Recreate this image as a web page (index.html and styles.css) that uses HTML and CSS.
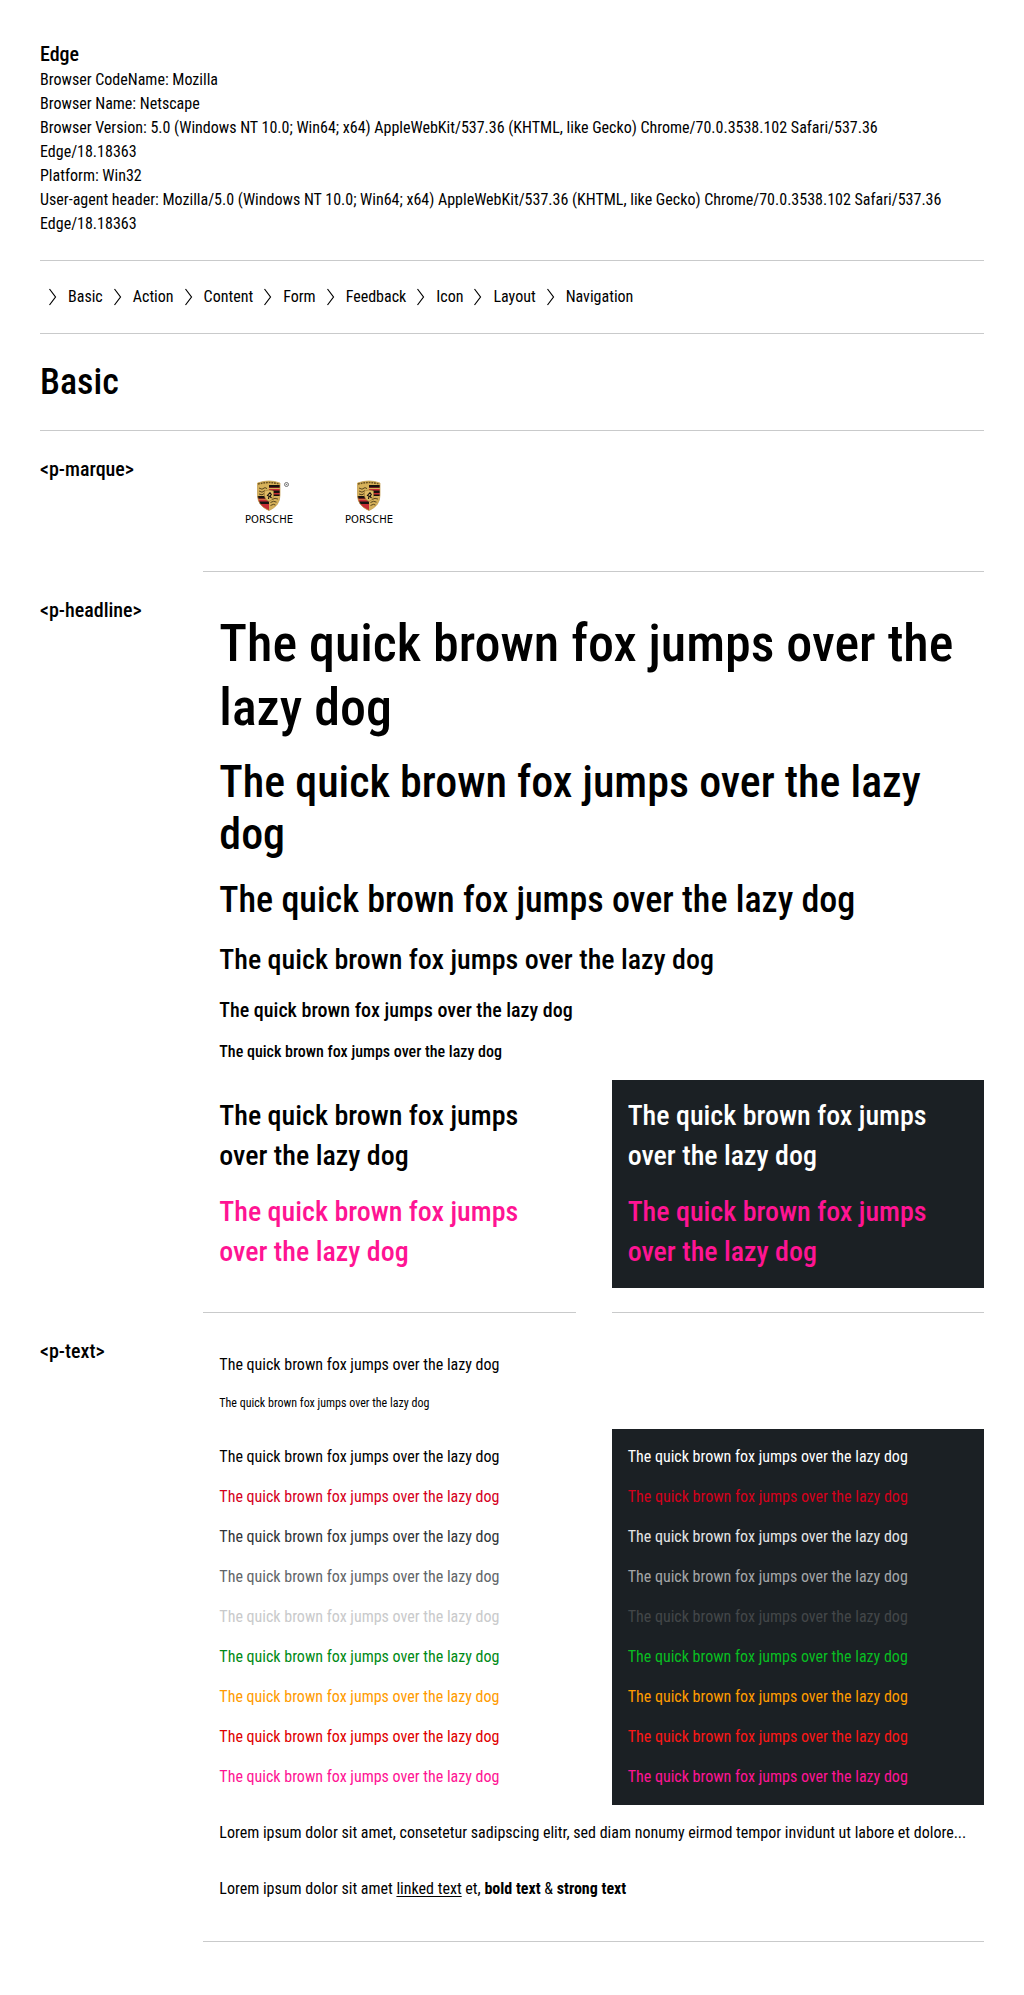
FILE: index.html
```
<!DOCTYPE html>
<html lang="en">
<head>
<meta charset="utf-8">
<meta name="viewport" content="width=device-width, initial-scale=1">
<title>Basic – Components Overview</title>
<link rel="stylesheet" href="styles.css">
</head>
<body>
<svg class="defs" aria-hidden="true">
  <symbol id="chevron" viewBox="0 0 24 24"><path d="M5.500 4 L11.500 12 L5.500 20" fill="none" stroke="currentColor" stroke-width="1.200"/></symbol>
  <symbol id="crest" viewBox="0 0 100 60">
    <clipPath id="shield"><path d="M38.500 12 Q50 8 61 12 L61 24 Q61 35 50 39.500 Q38.500 35 38.500 24 Z"/></clipPath>
    <g clip-path="url(#shield)">
      <rect x="38" y="9" width="24" height="31" fill="#d6b15a"/>
      <path d="M50 14 H61 V25 H50Z" fill="#c62c33"/>
      <path d="M50 14 H61 V16.500 H50Z M50 19.500 H61 V22 H50Z M50 23.500 H61 V25 H50Z" fill="#17120e"/>
      <path d="M50 17 H61 V18 H50Z" fill="#d6b15a"/>
      <path d="M38 25 H50 V40 H38Z" fill="#c62c33"/>
      <path d="M38 25 H50 V27.500 H38Z M38 30.500 H50 V33 H38Z" fill="#17120e"/>
      <path d="M38 28 H50 V28.600 H38Z" fill="#d6b15a"/>
      <path d="M39 13 Q50 10 60.500 13" fill="none" stroke="#6b5220" stroke-width="1.600" stroke-dasharray="1.800 .9"/>
      <path d="M40 17 l3 1.200 3-1.600 2 1 M40 20 l3 1.200 3-1.600 M40 23 l3 .8 2-1.200 M53 28.500 l3-1.200 3 .8 M51.500 31.500 l3-1.200 3 .8 M51.500 34.500 l3-1.200 2 .8" fill="none" stroke="#4a3a18" stroke-width=".9"/>
      <path d="M45.500 20 Q50 18 54.500 20 V25 Q54 29 50 30.500 Q46 29 45.500 25Z" fill="#dfbc66" stroke="#9a7a34" stroke-width=".6"/>
      <path d="M51 21.500 L48.500 24.500 L50 25 L49.500 28 M51 21.500 L52.300 23.500 L51 25.500 L52.500 27" fill="none" stroke="#17120e" stroke-width="1.100"/>
    </g>
    <path d="M38.500 12 Q50 8 61 12 L61 24 Q61 35 50 39.500 Q38.500 35 38.500 24 Z" fill="none" stroke="#c09a48" stroke-width=".7"/>
  </symbol>
</svg>
<main class="page">
  <header class="agent">
    <h2 class="label">Edge</h2>
    <p>Browser CodeName: Mozilla</p>
    <p>Browser Name: Netscape</p>
    <p>Browser Version: 5.0 (Windows NT 10.0; Win64; x64) AppleWebKit/537.36 (KHTML, like Gecko) Chrome/70.0.3538.102 Safari/537.36 Edge/18.18363</p>
    <p>Platform: Win32</p>
    <p>User-agent header: Mozilla/5.0 (Windows NT 10.0; Win64; x64) AppleWebKit/537.36 (KHTML, like Gecko) Chrome/70.0.3538.102 Safari/537.36 Edge/18.18363</p>
  </header>
  <nav class="nav" aria-label="Components">
    <a href="#basic"><svg class="icon"><use href="#chevron"/></svg>Basic</a>
    <a href="#action"><svg class="icon"><use href="#chevron"/></svg>Action</a>
    <a href="#content"><svg class="icon"><use href="#chevron"/></svg>Content</a>
    <a href="#form"><svg class="icon"><use href="#chevron"/></svg>Form</a>
    <a href="#feedback"><svg class="icon"><use href="#chevron"/></svg>Feedback</a>
    <a href="#icon"><svg class="icon"><use href="#chevron"/></svg>Icon</a>
    <a href="#layout"><svg class="icon"><use href="#chevron"/></svg>Layout</a>
    <a href="#navigation"><svg class="icon"><use href="#chevron"/></svg>Navigation</a>
  </nav>
  <h1 class="title h3" id="basic">Basic</h1>

  <section class="section">
    <h2 class="label">&lt;p-marque&gt;</h2>
    <div class="wide block marques ruled">
      <svg class="marque" viewBox="0 0 100 60" role="img" aria-label="Porsche, registered trademark"><use href="#crest"/><circle cx="67.500" cy="13.500" r="2" fill="none" stroke="#555" stroke-width=".8"/><circle cx="67.500" cy="13.500" r=".8" fill="#777"/><text class="marque-word" x="50" y="52" text-anchor="middle">PORSCHE</text></svg>
      <svg class="marque" viewBox="0 0 100 60" role="img" aria-label="Porsche"><use href="#crest"/><text class="marque-word" x="50" y="52" text-anchor="middle">PORSCHE</text></svg>
    </div>
  </section>

  <section class="section">
    <h2 class="label">&lt;p-headline&gt;</h2>
    <div class="wide block stack">
      <h1 class="h1">The quick brown fox jumps over the lazy dog</h1>
      <h2 class="h2">The quick brown fox jumps over the lazy dog</h2>
      <h3 class="h3">The quick brown fox jumps over the lazy dog</h3>
      <h4 class="h4">The quick brown fox jumps over the lazy dog</h4>
      <h5 class="h5">The quick brown fox jumps over the lazy dog</h5>
      <h6 class="h6">The quick brown fox jumps over the lazy dog</h6>
    </div>
    <div class="left ruled">
      <div class="block stack">
        <h4 class="h4">The quick brown fox jumps over the lazy dog</h4>
        <h4 class="h4 pink">The quick brown fox jumps over the lazy dog</h4>
      </div>
    </div>
    <div class="right ruled">
      <div class="block stack dark">
        <h4 class="h4">The quick brown fox jumps over the lazy dog</h4>
        <h4 class="h4 pink">The quick brown fox jumps over the lazy dog</h4>
      </div>
    </div>
  </section>

  <section class="section">
    <h2 class="label">&lt;p-text&gt;</h2>
    <div class="wide block stack">
      <p>The quick brown fox jumps over the lazy dog</p>
      <p class="small">The quick brown fox jumps over the lazy dog</p>
    </div>
    <div class="left block stack">
      <p>The quick brown fox jumps over the lazy dog</p>
      <p class="brand">The quick brown fox jumps over the lazy dog</p>
      <p class="contrast-high">The quick brown fox jumps over the lazy dog</p>
      <p class="contrast-medium">The quick brown fox jumps over the lazy dog</p>
      <p class="contrast-low">The quick brown fox jumps over the lazy dog</p>
      <p class="success">The quick brown fox jumps over the lazy dog</p>
      <p class="warning">The quick brown fox jumps over the lazy dog</p>
      <p class="error">The quick brown fox jumps over the lazy dog</p>
      <p class="pink">The quick brown fox jumps over the lazy dog</p>
    </div>
    <div class="right block stack dark">
      <p>The quick brown fox jumps over the lazy dog</p>
      <p class="brand">The quick brown fox jumps over the lazy dog</p>
      <p class="contrast-high">The quick brown fox jumps over the lazy dog</p>
      <p class="contrast-medium">The quick brown fox jumps over the lazy dog</p>
      <p class="contrast-low">The quick brown fox jumps over the lazy dog</p>
      <p class="success">The quick brown fox jumps over the lazy dog</p>
      <p class="warning">The quick brown fox jumps over the lazy dog</p>
      <p class="error">The quick brown fox jumps over the lazy dog</p>
      <p class="pink">The quick brown fox jumps over the lazy dog</p>
    </div>
    <div class="wide block">
      <p class="ellipsis">Lorem ipsum dolor sit amet, consetetur sadipscing elitr, sed diam nonumy eirmod tempor invidunt ut labore et dolore...</p>
    </div>
    <div class="wide ruled">
      <p class="block">Lorem ipsum dolor sit amet <a class="link" href="#linked">linked text</a> et, <b>bold text</b> &amp; <strong>strong text</strong></p>
    </div>
  </section>
</main>
</body>
</html>
```
FILE: styles.css
```
* {
  box-sizing: border-box;
}

body {
  margin: 0;
  background: #fff;
  color: #000;
  font: 400 16px/24px "Roboto Condensed", Roboto, "Liberation Sans", sans-serif;
}

h1, h2, h3, h4, h5, h6, p {
  margin: 0;
  font-weight: 400;
}

.defs {
  display: block;
  width: 0;
  height: 0;
}

.page {
  padding: 40px;
}

/* Page header */
.agent {
  padding: 0 24px 24px 0;
}

.nav {
  display: flex;
  flex-wrap: wrap;
  gap: 6px;
  padding: 24px 0 24px 4px;
  border: solid #c9cacb;
  border-width: 1px 0;
}

.nav a {
  display: flex;
  color: inherit;
  text-decoration: none;
}

.icon {
  width: 24px;
  height: 24px;
}

.title {
  padding: 24px 0;
  border-bottom: 1px solid #c9cacb;
}

/* Headline sizes */
.h1, .h2, .h3, .h4, .h5, .h6, .label {
  font-weight: 500;
}

.h1 { font-size: 52px; line-height: 64px; }
.h2 { font-size: 44px; line-height: 52px; }
.h3 { font-size: 36px; line-height: 48px; }
.h4 { font-size: 28px; line-height: 40px; }
.h5, .label { font-size: 20px; line-height: 28px; }
.h6 { font-size: 16px; line-height: 24px; }

.small {
  font-size: 12px;
  line-height: 20px;
}

/* Sections: label in the first two columns, samples in the other ten */
.section {
  display: grid;
  grid-template-columns: repeat(12, minmax(0, 1fr));
  column-gap: 36px;
  padding-top: 24px;
}

.section .label {
  grid-column: 1 / span 2;
  grid-row: 1;
}

.wide {
  grid-column: 3 / -1;
}

.left {
  grid-column: 3 / span 5;
}

.right {
  grid-column: 8 / -1;
}

.block {
  padding: 16px;
}

.stack {
  display: flex;
  flex-direction: column;
  gap: 16px;
}

.ruled {
  padding-bottom: 24px;
  border-bottom: 1px solid #c9cacb;
}

.marques {
  display: flex;
  padding-bottom: 40px;
}

.marque {
  width: 100px;
  height: 60px;
}

.marque-word {
  font: 400 10px "DejaVu Sans", sans-serif;
}

.ellipsis {
  overflow: hidden;
  text-overflow: ellipsis;
  white-space: nowrap;
}

.link {
  color: inherit;
  text-underline-offset: 2px;
}

/* Colours */
.dark { background: #1b2024; color: #fff; }
.brand { color: #d5001c; }
.contrast-high { color: #323639; }
.contrast-medium { color: #626669; }
.contrast-low { color: #c9cacb; }
.success { color: #018a16; }
.warning { color: #ff9b00; }
.error { color: #e00000; }
.dark .contrast-high { color: #e3e4e5; }
.dark .contrast-medium { color: #a4a6a8; }
.dark .contrast-low { color: #434749; }
.dark .success { color: #09bd22; }
.dark .error { color: #fc1717; }
.pink { color: #ff1493; }
```
